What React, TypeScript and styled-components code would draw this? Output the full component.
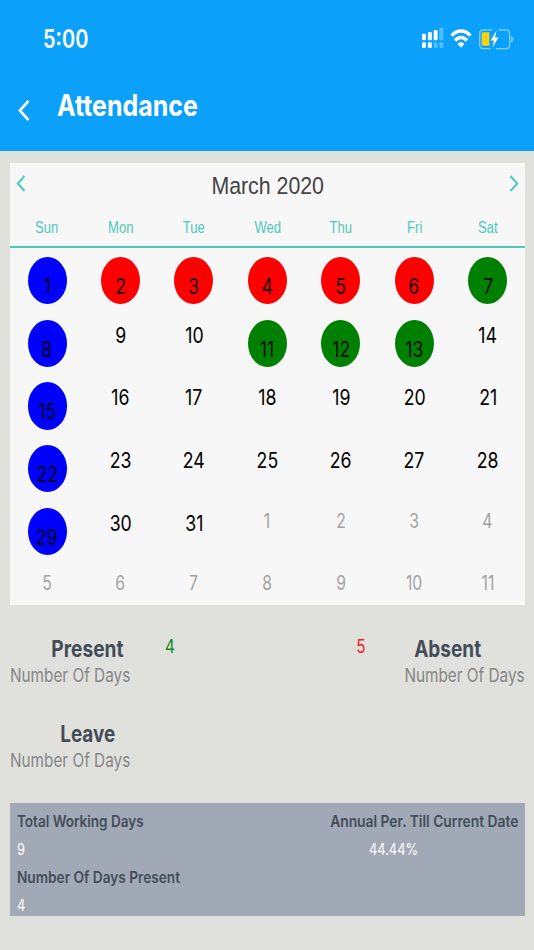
import React from 'react';
import styled, { createGlobalStyle } from 'styled-components';

const GlobalStyle = createGlobalStyle`
  *, *::before, *::after { box-sizing: border-box; }
  body { margin: 0; background: #e0e1dd; font-family: Inter, Roboto, sans-serif; }
`;

const teal = '#4fc9b9';
const slate = '#434d59';

/* Narrow lettering: glyphs are condensed horizontally around the given origin. */
const Condensed = styled.span<{ $x?: number; $from?: string }>`
  display: inline-block;
  white-space: nowrap;
  transform: scaleX(${p => p.$x ?? 0.805});
  transform-origin: ${p => p.$from ?? 'left'} center;
`;

const Screen = styled.main`
  width: 534px;
  height: 950px;
  overflow: hidden;
  background: #e0e1dd;
`;

const Header = styled.header`
  height: 151px;
  background: #0ba1fa;
  color: #fff;
`;

const StatusBar = styled.div`
  display: flex;
  align-items: center;
  justify-content: space-between;
  height: 78px;
  padding: 0 18px 0 43.2px;
`;

const Clock = styled(Condensed)`
  font-size: 25px;
  font-weight: 600;
  line-height: 30px;
`;

const TitleBar = styled.div`
  display: flex;
  align-items: center;
  height: 53px;
  padding-left: 18px;
`;

const BackButton = styled.button`
  display: flex;
  width: 39px;
  padding: 11px 0 0;
  border: 0;
  background: none;
  color: inherit;
`;

const Title = styled.h1`
  margin: 0;
  font-size: 29.5px;
  font-weight: 700;
  line-height: 36px;
`;

const Calendar = styled.section`
  height: 442px;
  margin: 12px 9.5px 0 10.3px;
  overflow: hidden;
  background: #f7f7f7;
`;

const MonthBar = styled.div`
  display: flex;
  justify-content: space-between;
  height: 46px;
  padding: 0 6px;
`;

const MonthButton = styled.button`
  display: flex;
  align-items: flex-start;
  padding: 11.5px 0 0;
  border: 0;
  background: none;
  color: ${teal};
`;

const MonthName = styled.h2`
  margin: 0;
  color: #434343;
  font: 400 24.5px/46px 'Liberation Sans', sans-serif;
`;

const WeekHeader = styled.div`
  display: grid;
  grid-template-columns: repeat(7, 1fr);
  height: 39px;
  border-bottom: 2px solid ${teal};
  color: ${teal};
  font: 400 16px/37px 'Liberation Sans', sans-serif;
  text-align: center;
`;

const MonthGrid = styled.div`
  display: grid;
  grid-template-columns: repeat(7, 1fr);
  grid-auto-rows: 62.7px;
  justify-items: center;
  padding-top: 9px;
`;

type Kind = 'holiday' | 'absent' | 'present' | 'plain' | 'outside';
const fills: Record<Kind, string> = {
  holiday: '#0000ff',
  absent: '#ff0000',
  present: '#008000',
  plain: 'transparent',
  outside: 'transparent',
};
const lines: Record<Kind, number> = { holiday: 58, absent: 58, present: 58, plain: 30.4, outside: 26.6 };

const Day = styled.div<{ $kind: Kind }>`
  display: flex;
  justify-content: center;
  width: 39px;
  height: 47.3px;
  border-radius: 50%;
  background: ${p => fills[p.$kind]};
  color: ${p => (p.$kind === 'outside' ? '#999' : '#000')};
  font-size: ${p => (p.$kind === 'outside' ? 19.5 : 22)}px;
  line-height: ${p => lines[p.$kind]}px;
`;

const DayNumber = styled(Condensed)<{ $soft: boolean }>`
  opacity: ${p => (p.$soft ? 0.9 : 1)};
`;

const Stats = styled.section`
  display: grid;
  grid-template-columns: 154.5px 1fr 1fr 159px;
  grid-auto-rows: 84.7px;
  height: 198px;
  padding: 30px 9.5px 0 10.3px;
`;

const Stat = styled.div<{ $side: 'left' | 'right' }>`
  display: flex;
  flex-direction: column;
  align-items: ${p => (p.$side === 'left' ? 'flex-start' : 'flex-end')};
`;

const StatTitle = styled.h3<{ $side: 'left' | 'right' }>`
  display: flex;
  justify-content: center;
  width: ${p => (p.$side === 'left' ? 154 : 153)}px;
  margin: 0;
  color: ${slate};
  font-size: 22.5px;
  font-weight: 700;
  line-height: 27px;
`;

const StatCaption = styled(Condensed)`
  color: #868686;
  font-size: 18.7px;
  line-height: 28.4px;
`;

const Count = styled.div<{ $color: string; $side: 'left' | 'right' }>`
  color: ${p => p.$color};
  text-align: ${p => p.$side};
  font-size: 19px;
  line-height: 23.4px;
`;

const Summary = styled.section`
  display: grid;
  grid-template-columns: 1fr 1fr;
  grid-auto-rows: 56.4px;
  height: 113px;
  margin: 0 9.5px 0 10.3px;
  padding: 4.6px 6.5px 0;
  background: #a1a9b7;
`;

const Figure = styled.div<{ $side?: 'right' }>`
  display: flex;
  flex-direction: column;
  align-items: ${p => (p.$side === 'right' ? 'flex-end' : 'flex-start')};
`;

const FigureLabel = styled(Condensed)`
  color: ${slate};
  font-size: 15.8px;
  font-weight: 600;
  line-height: 28.2px;
`;

const FigureValue = styled(Condensed)<{ $shift?: number }>`
  margin-right: ${p => p.$shift ?? 0}px;
  color: #fff;
  font-size: 16px;
  line-height: 27.4px;
`;

const StatusIcons = () => (
  <svg width="96" height="26" viewBox="420 26 96 26" fill="#fff">
    <rect x="422" y="33.7" width="3.9" height="6.6" rx="1" />
    <rect x="427.9" y="32" width="3.9" height="8.3" rx="1" />
    <rect x="433.7" y="30" width="3.9" height="10.3" rx="1" />
    <rect x="439.4" y="27.8" width="3.9" height="12.5" rx="1" opacity=".3" />
    <rect x="422" y="42.3" width="3.9" height="5.6" rx="1.2" />
    <rect x="427.9" y="42.3" width="3.9" height="5.6" rx="1.2" />
    <rect x="433.7" y="42.3" width="3.9" height="5.6" rx="1.2" opacity=".3" />
    <rect x="439.4" y="42.3" width="3.9" height="5.6" rx="1.2" opacity=".3" />
    <g fill="none" stroke="#fff" strokeWidth="3.5">
      <path d="M451.7 35.6C457 29.3 465 29.3 470.3 35.6" />
      <path d="M455.1 40.6C458.5 36.5 463.5 36.5 466.9 40.6" />
    </g>
    <path d="M457.6 43.9C459.5 41.7 462.5 41.7 464.4 43.9L461 47.8Z" />
    <path d="M492.3 29.8H483Q479.7 29.8 479.7 33.8V44.6Q479.7 48.6 483 48.6H490.5M498.5 29.8H506Q509.6 29.8 509.6 33.8V44.6Q509.6 48.6 506 48.6H496" fill="none" stroke="#fff" strokeWidth="1.2" opacity=".5" />
    <path d="M511.2 36Q513.3 37 513.3 39.2T511.2 42.4Z" opacity=".55" />
    <path d="M483 32.2H489.3V45.8H483Q481.7 45.8 481.7 44V34Q481.7 32.2 483 32.2Z" fill="#fbd013" />
    <path d="M496.6 30.6L490.6 40.6H494L492.4 47.6L498.5 37.6H495Z" />
  </svg>
);

const Chevron = ({ w, h, stroke, flip }: { w: number; h: number; stroke: number; flip?: boolean }) => (
  <svg width={w} height={h} viewBox={`0 0 ${w} ${h}`} fill="none" stroke="currentColor" strokeWidth={stroke}>
    <path d={flip ? `M1.5 1L${w - 1.8} ${h / 2}L1.5 ${h - 1}` : `M${w - 1.5} 1L1.8 ${h / 2}L${w - 1.5} ${h - 1}`} />
  </svg>
);

const weekdays = ['Sun', 'Mon', 'Tue', 'Wed', 'Thu', 'Fri', 'Sat'];
const holidays = [1, 8, 15, 22, 29];
const absences = [2, 3, 4, 5, 6];
const attended = [7, 11, 12, 13];

const kindOf = (index: number): Kind => {
  const day = index + 1;
  if (day > 31) return 'outside';
  if (holidays.includes(day)) return 'holiday';
  if (absences.includes(day)) return 'absent';
  return attended.includes(day) ? 'present' : 'plain';
};

export default function App() {
  return (
    <>
      <GlobalStyle />
      <Screen>
        <Header>
          <StatusBar>
            <Clock $x={0.8}>5:00</Clock>
            <StatusIcons />
          </StatusBar>
          <TitleBar>
            <BackButton aria-label="Back">
              <Chevron w={12} h={21} stroke={2.6} />
            </BackButton>
            <Title>
              <Condensed $x={0.846}>Attendance</Condensed>
            </Title>
          </TitleBar>
        </Header>
        <Calendar>
          <MonthBar>
            <MonthButton aria-label="Previous month">
              <Chevron w={10} h={17} stroke={2} />
            </MonthButton>
            <MonthName>
              <Condensed $x={0.87} $from="center">March 2020</Condensed>
            </MonthName>
            <MonthButton aria-label="Next month">
              <Chevron w={10} h={17} stroke={2} flip />
            </MonthButton>
          </MonthBar>
          <WeekHeader>
            {weekdays.map(name => (
              <Condensed key={name} $x={0.815} $from="center">{name}</Condensed>
            ))}
          </WeekHeader>
          <MonthGrid>
            {Array.from({ length: 42 }, (_, i) => {
              const kind = kindOf(i);
              return (
                <Day key={i} $kind={kind}>
                  <DayNumber $from="center" $soft={kind !== 'plain'}>{i < 31 ? i + 1 : i - 30}</DayNumber>
                </Day>
              );
            })}
          </MonthGrid>
        </Calendar>
        <Stats>
          <Stat $side="left">
            <StatTitle $side="left"><Condensed $x={0.85} $from="center">Present</Condensed></StatTitle>
            <StatCaption $x={0.82}>Number Of Days</StatCaption>
          </Stat>
          <Count $side="left" $color="#0f8a14"><Condensed>4</Condensed></Count>
          <Count $side="right" $color="#ea1c24"><Condensed $from="right">5</Condensed></Count>
          <Stat $side="right">
            <StatTitle $side="right"><Condensed $x={0.845} $from="center">Absent</Condensed></StatTitle>
            <StatCaption $x={0.82} $from="right">Number Of Days</StatCaption>
          </Stat>
          <Stat $side="left">
            <StatTitle $side="left"><Condensed $x={0.84} $from="center">Leave</Condensed></StatTitle>
            <StatCaption $x={0.82}>Number Of Days</StatCaption>
          </Stat>
        </Stats>
        <Summary>
          <Figure>
            <FigureLabel $x={0.856}>Total Working Days</FigureLabel>
            <FigureValue>9</FigureValue>
          </Figure>
          <Figure $side="right">
            <FigureLabel $x={0.874} $from="right">Annual Per. Till Current Date</FigureLabel>
            <FigureValue $from="right" $shift={100.3}>44.44%</FigureValue>
          </Figure>
          <Figure>
            <FigureLabel $x={0.865}>Number Of Days Present</FigureLabel>
            <FigureValue>4</FigureValue>
          </Figure>
        </Summary>
      </Screen>
    </>
  );
}
